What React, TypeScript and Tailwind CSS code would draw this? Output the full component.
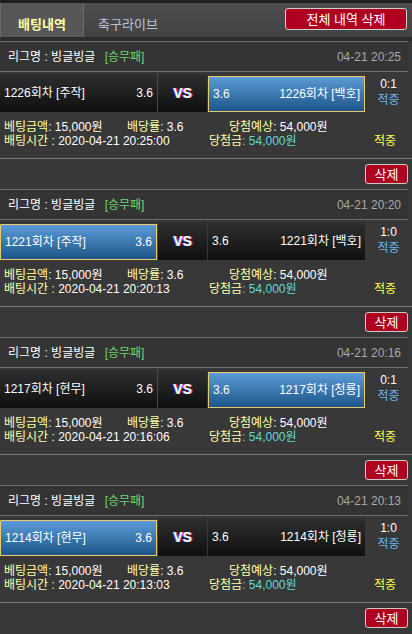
import { clsx as cn } from 'clsx'

type Bet = {
  round: string
  home: string
  away: string
  pick: 'home' | 'away'
  score: string
  date: string
  time: string
}

const bets: Bet[] = [
  { round: '1226회차', home: '[주작]', away: '[백호]', pick: 'away', score: '0:1', date: '04-21 20:25', time: '2020-04-21 20:25:00' },
  { round: '1221회차', home: '[주작]', away: '[백호]', pick: 'home', score: '1:0', date: '04-21 20:20', time: '2020-04-21 20:20:13' },
  { round: '1217회차', home: '[현무]', away: '[청룡]', pick: 'away', score: '0:1', date: '04-21 20:16', time: '2020-04-21 20:16:06' },
  { round: '1214회차', home: '[현무]', away: '[청룡]', pick: 'home', score: '1:0', date: '04-21 20:13', time: '2020-04-21 20:13:03' },
]

function TeamCell({ selected, side, name }: { selected: boolean; side: 'home' | 'away'; name: string }) {
  return (
    <div
      className={cn(
        'flex w-[157px] items-center justify-between px-1 text-white',
        selected
          ? 'mt-[3px] h-[36px] border border-[#ecc96a] bg-[linear-gradient(#5b9bd8,#1d5688)]'
          : 'h-[38px] bg-[linear-gradient(#2f2f2f,#0f0f0f)]',
      )}
    >
      {side === 'home' ? (
        <>
          <span>{name}</span>
          <span>3.6</span>
        </>
      ) : (
        <>
          <span>3.6</span>
          <span>{name}</span>
        </>
      )}
    </div>
  )
}

function BetCard({ bet }: { bet: Bet }) {
  return (
    <div>
      <div className="flex h-[31px] w-[408px] items-center justify-between border-y border-[#6e6e6e] bg-[#343434] pl-[8px] pr-[7px]">
        <span className="text-white">
          리그명 : 빙글빙글 <span className="ml-[6px] text-[#6fd46f]">[승무패]</span>
        </span>
        <span className="text-[#a8a8a8]">{bet.date}</span>
      </div>

      <div className="flex h-[40px] items-end">
        <TeamCell selected={bet.pick === 'home'} side="home" name={`${bet.round} ${bet.home}`} />
        <div className="h-[38px] w-px bg-[#4a4a4a]" />
        <div className="flex h-[38px] w-[49px] items-center justify-center bg-[linear-gradient(#2f2f2f,#0f0f0f)] text-[14px] font-bold text-white [text-shadow:-1px_0_#3a4dff,1px_0_#ff3b3b]">
          VS
        </div>
        <div className="w-px" />
        <TeamCell selected={bet.pick === 'away'} side="away" name={`${bet.round} ${bet.away}`} />
        <div className="flex h-[40px] flex-1 flex-col items-center justify-center leading-[16px]">
          <span className="text-white">{bet.score}</span>
          <span className="text-[#6db4f2]">적중</span>
        </div>
      </div>

      <div className="h-[46px] px-1 pt-[8px] leading-[14px]">
        <div className="flex">
          <span className="w-[123px]">
            <span className="text-[#ffffa6]">베팅금액</span>
            <span className="text-white">: 15,000원</span>
          </span>
          <span className="w-[102px]">
            <span className="text-[#ffffa6]">배당률</span>
            <span className="text-white">: 3.6</span>
          </span>
          <span>
            <span className="text-[#ffffa6]">당첨예상</span>
            <span className="text-white">: 54,000원</span>
          </span>
        </div>
        <div className="flex">
          <span className="w-[205px]">
            <span className="text-[#ffffa6]">배팅시간 :</span>
            <span className="text-white"> {bet.time}</span>
          </span>
          <span className="w-[165px]">
            <span className="text-[#ffffa6]">당첨금</span>
            <span className="text-[#5fd9d9]">: 54,000원</span>
          </span>
          <span className="text-[#ffff4a]">적중</span>
        </div>
      </div>

      <div className="flex h-[31px] justify-end border-t border-[#7a7a7a] pr-[4px] pt-[5px]">
        <button className="h-[20px] w-[43px] rounded-[3px] border border-[#c9c9c9] bg-[#b0001f] text-[13px] leading-none text-white">
          삭제
        </button>
      </div>
    </div>
  )
}

export default function App() {
  return (
    <div className="h-[634px] w-[412px] overflow-hidden bg-[#383838] font-['Liberation_Sans','Noto_Sans_CJK_KR',sans-serif] text-[12px] leading-[14px]">
      <div className="h-[3px] bg-[#1f1f1f]" />
      <div className="flex h-[34px] items-stretch bg-[linear-gradient(#4e4e4e,#434343)]">
        <div className="flex w-[84px] items-center justify-center border-x border-[#6a6a6a] bg-[#575757] pt-[10px] text-[13px] font-bold text-[#ffffa0]">
          배팅내역
        </div>
        <div className="flex w-[88px] items-center justify-center pt-[10px] text-[13px] text-[#b6c2da]">
          축구라이브
        </div>
        <div className="flex flex-1 items-start justify-end pr-[5px] pt-[5px]">
          <button className="h-[22px] w-[122px] rounded-[3px] border border-[#cfcfcf] bg-[#b0001f] text-[13px] leading-none text-white">
            전체 내역 삭제
          </button>
        </div>
      </div>
      <div className="h-[4px] bg-[#2c2c2c]" />
      {bets.map((bet) => (
        <BetCard key={bet.round} bet={bet} />
      ))}
    </div>
  )
}
